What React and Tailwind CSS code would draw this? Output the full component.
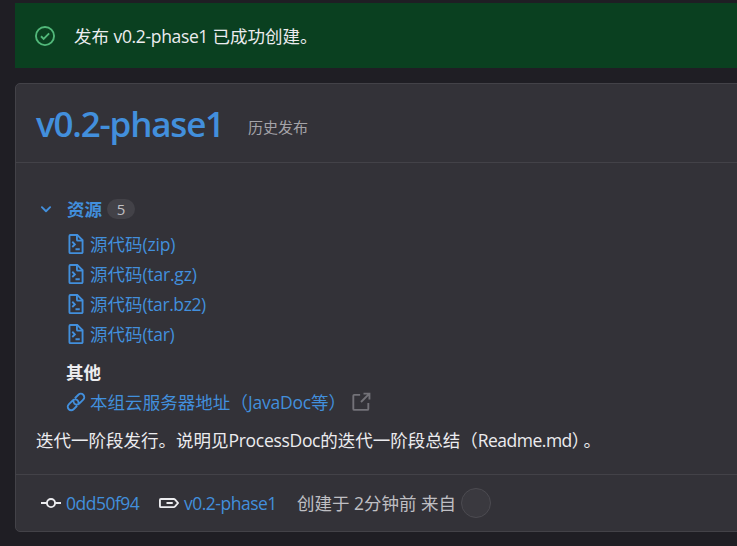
import React from "react";

function Icon({ className = "", children }) {
  return (
    <svg viewBox="0 0 16 16" className={`h-5 w-5 shrink-0 ${className}`} fill="none" stroke="currentColor" strokeWidth="1.5">
      {children}
    </svg>
  );
}

function DocumentIcon() {
  return (
    <Icon>
      <path d="M9 .75H3.5a.75.75 0 0 0-.75.75v13c0 .41.34.75.75.75h9a.75.75 0 0 0 .75-.75V5z" />
      <path d="M8.75.75V4.5c0 .4.35.75.75.75h3.75" />
      <path d="m5 6.2 2.1 2.1L5 10.4M7.6 12.2H11" />
    </Icon>
  );
}

const sources = [
  { name: "(zip)", track: "tracking-[-0.2px]" },
  { name: "(tar.gz)", track: "tracking-[-0.2px]" },
  { name: "(tar.bz2)", track: "tracking-[-0.4px]" },
  { name: "(tar)", track: "tracking-[-0.3px]" },
];

export default function App() {
  return (
    <div className="h-[546px] w-[737px] overflow-hidden bg-[#1f1e24] pt-[3px] pl-[15px] font-['Open_Sans','Noto_Sans_CJK_SC',sans-serif] text-[17.5px] leading-[30px] whitespace-nowrap text-[#ececef]">
      <div className="flex h-[65px] items-center bg-[#0a4020] pl-5">
        <Icon className="text-[#52b87a]">
          <circle cx="8" cy="8" r="7.25" />
          <path d="m4.8 8.2 2.1 2.1 4.4-4.4" />
        </Icon>
        <span className="ml-[19px]">发布 <span className="tracking-[-0.35px]">v0.2-phase1</span> 已成功创建。</span>
      </div>

      <div className="mt-[15px] flex h-[449px] w-[760px] flex-col rounded-[5px] border border-[#434248] bg-[#333238]">
        <div className="flex h-[79px] shrink-0 items-center border-b border-[#434248] pl-5">
          <h2 className="w-[187px] pt-[2px] text-[35px] font-semibold tracking-[-1.2px] text-[#428fdc]">v0.2-phase1</h2>
          <span className="ml-[25px] pt-[7px] text-[15px] text-[#a4a3a8]">历史发布</span>
        </div>

        <div className="flex grow flex-col pt-[31px] pl-5">
          <div className="flex h-[30px] items-center text-[#428fdc]">
            <svg viewBox="0 0 16 16" className="h-5 w-5" fill="none" stroke="currentColor" strokeWidth="1.5" strokeLinecap="round" strokeLinejoin="round">
              <path d="m4.7 6.5 3.3 3.3 3.3-3.3" />
            </svg>
            <span className="ml-[11px] font-bold">资源</span>
            <span className="ml-[5px] flex h-5 w-7 items-center justify-center rounded-full bg-[#434248] text-[15px] text-[#bfbfc3]">5</span>
          </div>
          <div className="mt-[5px] flex flex-col pl-[30px] text-[#428fdc]">
            {sources.map(({ name, track }) => (
              <div key={name} className="flex h-[30px] items-center">
                <DocumentIcon />
                <span className="ml-1">源代码<span className={track}>{name}</span></span>
              </div>
            ))}
          </div>
          <div className="mt-2 h-[30px] pl-[30px] font-bold">其他</div>
          <div className="flex h-[30px] items-center pl-[30px] text-[#428fdc]">
            <Icon>
              <path d="M7.1 5 9.9 2.2a2.75 2.75 0 0 1 3.9 3.9L10.6 9.3a2.75 2.75 0 0 1-3.9 0 2.6 2.6 0 0 1-.6-2.6M8.9 11l-2.8 2.8a2.75 2.75 0 0 1-3.9-3.9L5.4 6.7a2.75 2.75 0 0 1 3.9 0 2.6 2.6 0 0 1 .6 2.6" />
            </Icon>
            <span className="ml-1 w-[251px] tracking-[0.05px]">本组云服务器地址（<span className="tracking-[-0.2px]">JavaDoc</span>等）</span>
            <Icon className="ml-[10px] text-[#737278]">
              <path d="M7.3 2.25H2.6a.75.75 0 0 0-.75.75v10.5c0 .41.34.75.75.75h10.5a.75.75 0 0 0 .75-.75V8.8M10 1.25h4.75V6M14.5 1.5 8 8" />
            </Icon>
          </div>
          <div className="mt-2 h-[30px]">
            迭代一阶段发行。说明见<span className="tracking-[-0.3px]">ProcessDoc</span>的迭代一阶段总结（<span className="tracking-[-0.5px]">Readme.md</span><span className="mr-[3px]">）</span>。
          </div>
        </div>

        <div className="flex h-[57px] shrink-0 items-center border-t border-[#434248] pl-[25px]">
          <Icon>
            <circle cx="8" cy="8" r="3.25" />
            <path d="M0 8h4.75M11.25 8H16" />
          </Icon>
          <span className="ml-[5px] w-[74px] tracking-[-0.5px] text-[#428fdc]">0dd50f94</span>
          <Icon className="ml-[19px]">
            <path d="M1.5 4.75h10.3c.4 0 .8.2 1.1.5L15.2 8l-2.3 2.75c-.3.3-.7.5-1.1.5H1.5a.75.75 0 0 1-.75-.75v-5c0-.41.34-.75.75-.75zM6 8h5" />
          </Icon>
          <span className="ml-[5px] w-[94px] tracking-[-0.5px] text-[#428fdc]">v0.2-phase1</span>
          <span className="ml-[19px] text-[#bfbfc3]">创建于 2分钟前 来自</span>
          <span className="ml-[5px] h-[30px] w-[30px] rounded-full border border-[#4c4b51] bg-[#3a393f]" />
        </div>
      </div>
    </div>
  );
}
